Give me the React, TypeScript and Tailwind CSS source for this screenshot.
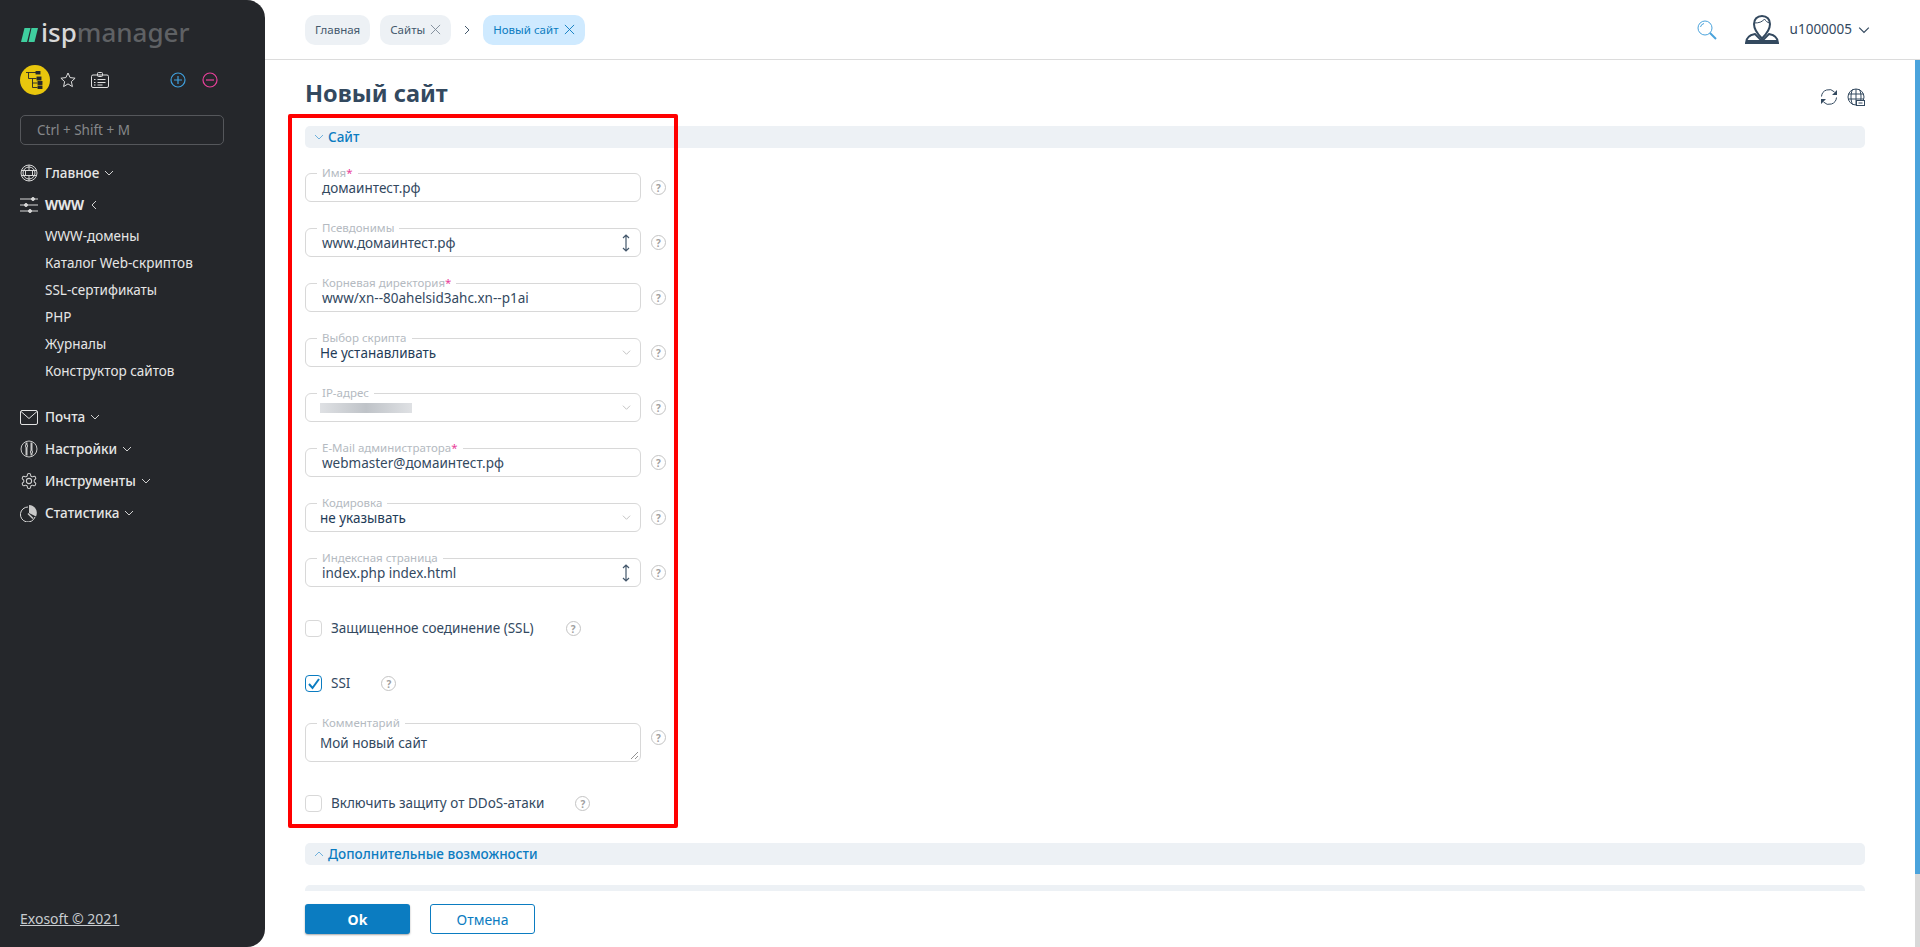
import { ReactNode } from "react";

const font = "font-['Noto_Sans','Open_Sans',sans-serif]";

const Chevron = ({ className = "", dir = "down" }: { className?: string; dir?: "down" | "up" | "left" | "right" }) => {
  const d = { down: "M1 3l4 4 4-4", up: "M1 7l4-4 4 4", left: "M7 1L3 5l4 4", right: "M3 1l4 4-4 4" }[dir];
  return (
    <svg viewBox="0 0 10 10" fill="none" stroke="currentColor" strokeWidth="1" className={className}>
      <path d={d} />
    </svg>
  );
};

const Cross = ({ className = "" }: { className?: string }) => (
  <svg viewBox="0 0 12 12" fill="none" stroke="currentColor" strokeWidth="1" className={className}>
    <path d="M1 1l10 10M11 1L1 11" />
  </svg>
);

const Help = ({ className = "" }: { className?: string }) => (
  <span className={`flex size-[15px] shrink-0 items-center justify-center rounded-full border border-[#c4c4c4] text-[10px] leading-none font-bold text-[#a0a0a0] ${className}`}>
    ?
  </span>
);

const Updown = () => (
  <svg viewBox="0 0 10 18" fill="none" stroke="#44586c" strokeWidth="1.2" className="h-[18px] w-[10px]">
    <path d="M5 1v16M2 4l3-3 3 3M2 14l3 3 3-3" />
  </svg>
);

const GlobeIcon = () => (
  <svg viewBox="0 0 18 18" fill="none" stroke="#d8d8d8" strokeWidth="1" className="size-[18px]">
    <circle cx="9" cy="9" r="8" />
    <circle cx="9" cy="9" r="6" />
    <rect x="5.5" y="6.5" width="7" height="5" />
    <path d="M9 1v5M9 12v5M1.5 6.5h4M12.5 6.5h4M1.5 11.5h4M12.5 11.5h4" />
  </svg>
);

const SlidersIcon = () => (
  <svg viewBox="0 0 18 16" fill="none" stroke="#d8d8d8" strokeWidth="1" className="h-[16px] w-[18px]">
    <path d="M0 2h18M0 8h18M0 14h18" />
    <circle cx="13" cy="2" r="1.5" fill="#d8d8d8" />
    <circle cx="6" cy="8" r="1.5" fill="#d8d8d8" />
    <circle cx="10" cy="14" r="1.5" fill="#d8d8d8" />
  </svg>
);

const MailIcon = () => (
  <svg viewBox="0 0 18 15" fill="none" stroke="#e2e2e2" strokeWidth="1" className="h-[15px] w-[18px]">
    <rect x="0.5" y="0.5" width="17" height="14" rx="1.5" />
    <path d="M1 1.5l8 7 8-7" />
  </svg>
);

const TuneIcon = () => (
  <svg viewBox="0 0 18 18" fill="none" stroke="#c8c8c8" strokeWidth="1" className="size-[18px]">
    <circle cx="9" cy="9" r="8" />
    <path d="M6.5 2.500v13M11.500 2.500v13" strokeWidth="2" />
    <circle cx="6.5" cy="6" r="1.2" fill="#25272b" />
    <circle cx="11.5" cy="12" r="1.2" fill="#25272b" />
  </svg>
);

const GearIcon = () => (
  <svg viewBox="0 0 24 24" fill="none" stroke="#d0d0d0" strokeWidth="1.4" className="size-[18px]">
    <circle cx="12" cy="12" r="3.5" />
    <path d="M12.22 2h-.44a2 2 0 0 0-2 2v.18a2 2 0 0 1-1 1.73l-.43.25a2 2 0 0 1-2 0l-.15-.08a2 2 0 0 0-2.73.73l-.22.38a2 2 0 0 0 .73 2.73l.15.1a2 2 0 0 1 1 1.72v.51a2 2 0 0 1-1 1.74l-.15.09a2 2 0 0 0-.73 2.73l.22.38a2 2 0 0 0 2.73.73l.15-.08a2 2 0 0 1 2 0l.43.25a2 2 0 0 1 1 1.73V20a2 2 0 0 0 2 2h.44a2 2 0 0 0 2-2v-.18a2 2 0 0 1 1-1.73l.43-.25a2 2 0 0 1 2 0l.15.08a2 2 0 0 0 2.73-.73l.22-.39a2 2 0 0 0-.73-2.73l-.15-.08a2 2 0 0 1-1-1.74v-.5a2 2 0 0 1 1-1.74l.15-.09a2 2 0 0 0 .73-2.73l-.22-.38a2 2 0 0 0-2.73-.73l-.15.08a2 2 0 0 1-2 0l-.43-.25a2 2 0 0 1-1-1.73V4a2 2 0 0 0-2-2z" />
  </svg>
);

const PieIcon = () => (
  <svg viewBox="0 0 18 18" className="size-[18px]">
    <path d="M8 3a7.5 7.5 0 1 0 7 10" fill="none" stroke="#d8d8d8" strokeWidth="1" />
    <path d="M9 1a8 8 0 0 1 7 11.5L9 9z" fill="#c8c8c8" />
    <path d="M8 9.5l5 5" stroke="#c8c8c8" strokeWidth="1.5" />
  </svg>
);

const NavHead = ({ icon, label, open, bold }: { icon: ReactNode; label: string; open?: boolean; bold?: boolean }) => (
  <div className="flex h-8 items-center">
    <span className="flex w-[25px] shrink-0 items-center">{icon}</span>
    <span className={`text-[13.5px] text-[#e6e6e6] ${bold ? "font-bold" : "font-medium"}`}>{label}</span>
    <Chevron dir={open ? "left" : "down"} className="ml-[5px] size-[10px] text-[#d0d0d0]" />
  </div>
);

const Sidebar = () => (
  <aside className="flex h-[947px] w-[265px] shrink-0 flex-col rounded-r-[18px] bg-[#25272b] pr-[41px] pb-[19px] pl-5">
    <div className="flex h-[48px] shrink-0 items-end">
      <svg viewBox="0 0 17 14" className="mb-[6px] ml-px h-[14px] w-[17px]">
        <path d="M3.500 0H9.500L6 14H0zM10.500 0H17l-3.500 14H7.500z" fill="#3fcf9f" />
      </svg>
      <span className="ml-[3px] text-[26px] leading-[32px] font-medium text-[#d8d8d8]">
        isp<span className="text-[#5f6164]">manager</span>
      </span>
    </div>
    <div className="mt-[17px] flex h-[30px] shrink-0 items-center">
      <span className="flex size-[30px] items-center justify-center rounded-full bg-[#e8c60d]">
        <svg viewBox="0 0 18 18" fill="none" stroke="#25272b" strokeWidth="0.9" className="size-[18px]">
          <path d="M0 1.500h10M2.500 1.500v6h8M6.500 7.500v9h5M6.500 12h5" />
          <rect x="10" y="0" width="4" height="3" fill="#25272b" />
          <rect x="11" y="6" width="4" height="3" fill="#25272b" />
          <rect x="12" y="10.500" width="4" height="3" fill="#25272b" />
          <rect x="12" y="15" width="4" height="3" fill="#25272b" />
        </svg>
      </span>
      <svg viewBox="0 0 16 16" fill="none" stroke="#e0e0e0" strokeWidth="1" className="ml-[10px] size-4">
        <path d="M8 1l2.100 4.600 5 .6-3.700 3.400 1 5L8 11.900l-4.400 2.700 1-5L.9 6.200l5-.6z" />
      </svg>
      <svg viewBox="0 0 18 16" fill="none" stroke="#e0e0e0" strokeWidth="1" className="ml-[15px] h-4 w-[18px]">
        <rect x="0.5" y="3" width="17" height="12.5" rx="1.5" />
        <rect x="6.5" y="0.5" width="5" height="4" rx="1" />
        <path d="M3 7.500h1.500M6.500 7.500h8M3 10.500h1.500M6.500 10.500h8M3 13h1.500M6.500 13h5" />
      </svg>
      <span className="ml-auto flex items-center gap-4">
        <svg viewBox="0 0 16 16" fill="none" stroke="#3f9fdc" strokeWidth="1.2" className="size-4">
          <circle cx="8" cy="8" r="7" />
          <path d="M4 8h8M8 4v8" />
        </svg>
        <svg viewBox="0 0 16 16" fill="none" stroke="#e8409a" strokeWidth="1.2" className="mr-[6px] size-4">
          <circle cx="8" cy="8" r="7" />
          <path d="M4 8h8" />
        </svg>
      </span>
    </div>
    <div className="mt-5 flex h-[30px] shrink-0 items-center rounded-[5px] border border-[#55575b] pl-4 text-[13.5px] text-[#85878a]">
      Ctrl + Shift + M
    </div>
    <nav className="mt-3 flex flex-1 flex-col">
      <NavHead icon={<GlobeIcon />} label="Главное" />
      <NavHead icon={<SlidersIcon />} label="WWW" open bold />
      <div className="flex flex-col pt-[2px] pb-4 pl-[25px] text-[13.5px] text-[#e6e6e6]">
        {["WWW-домены", "Каталог Web-скриптов", "SSL-сертификаты", "PHP", "Журналы", "Конструктор сайтов"].map((item) => (
          <span key={item} className="flex h-[27px] items-center">{item}</span>
        ))}
      </div>
      <NavHead icon={<MailIcon />} label="Почта" />
      <NavHead icon={<TuneIcon />} label="Настройки" />
      <NavHead icon={<GearIcon />} label="Инструменты" />
      <NavHead icon={<PieIcon />} label="Статистика" />
    </nav>
    <a className="self-start text-[14px] leading-[18px] text-[#c8ccd0] underline">Exosoft © 2021</a>
  </aside>
);

const Tab = ({ label, active, close }: { label: string; active?: boolean; close?: boolean }) => (
  <div className={`flex h-[30px] items-center gap-[5px] rounded-[10px] px-[10px] text-[11.5px] ${active ? "bg-[#cfeaff] text-[#0b7cc1]" : "bg-[#edf1f5] text-[#44586c]"}`}>
    {label}
    {close && <Cross className={`size-[11px] ${active ? "text-[#0b7cc1]" : "text-[#7d8a97]"}`} />}
  </div>
);

const Header = () => (
  <header className="flex h-[60px] shrink-0 items-center border-b border-[#dcdcdc] pr-[50px] pl-10">
    <Tab label="Главная" />
    <div className="ml-[10px]">
      <Tab label="Сайты" close />
    </div>
    <Chevron dir="right" className="mx-[11px] size-[10px] text-[#44586c]" />
    <Tab label="Новый сайт" active close />
    <svg viewBox="0 0 20 20" fill="none" stroke="#4aa3dc" strokeWidth="1" className="mr-[28px] ml-auto size-5">
      <circle cx="8" cy="8" r="7" />
      <path d="M3.500 7a4.500 4.500 0 0 1 3.500-3.500" />
      <path d="M13 13l6 6" strokeWidth="2" />
    </svg>
    <svg viewBox="0 0 34 30" className="h-[30px] w-[34px]" fill="none" stroke="#33495f" strokeWidth="2">
      <path d="M17 1c5 0 8 3.500 8 8 0 5-4.500 11-8 14.500C13.500 20 9 14 9 9c0-4.500 3-8 8-8z" />
      <path d="M9.500 8c4 0 8-1 10-4 1 2 3 3.500 5 4" strokeWidth="1" />
      <path d="M10 19c-5 1-9 3-9 9h32c0-6-4-8-9-9l-7 7z" strokeWidth="2" />
      <path d="M2 26.500h30" strokeWidth="3" />
    </svg>
    <span className="ml-[11px] text-[13.5px] text-[#33495f]">u1000005</span>
    <Chevron className="ml-[6px] size-3 text-[#33495f]" />
  </header>
);

const SectionBar = ({ title, open }: { title: string; open?: boolean }) => (
  <div className="flex h-[22px] shrink-0 items-center rounded-[5px] bg-[#edf1f5] pl-[9px]">
    <Chevron dir={open ? "down" : "up"} className="size-[10px] text-[#6fb1dc]" />
    <span className="ml-[4px] text-[13.5px] font-medium text-[#0b7cc1]">{title}</span>
  </div>
);

const Field = ({ label, value, required, kind, tall, disabled }: {
  label: string;
  value?: string;
  required?: boolean;
  kind?: "select" | "multi" | "text";
  tall?: boolean;
  disabled?: boolean;
}) => (
  <div className="flex items-center">
    <div className={`relative flex w-[336px] shrink-0 rounded-[6px] border border-[#d8d8d8] pr-[9px] ${tall ? "h-[39px] pt-[10px]" : "h-[29px] items-center"} ${kind === "select" || tall ? "pl-[14px]" : "pl-4"}`}>
      <span className="absolute -top-[8px] left-[11px] bg-white px-[5px] text-[11.5px] leading-[14px] text-[#b4bac1]">
        {label}
        {required && <span className="text-[#e8409a]">*</span>}
      </span>
      {disabled ? (
        <span className="h-[10px] w-[92px] bg-gradient-to-r from-[#dfe1e4] via-[#bfc3c8] to-[#dfe1e4]" />
      ) : (
        <span className={`text-[13.5px] leading-[18px] ${kind === "select" ? "text-[#1f3c58]" : "text-[#33495f]"}`}>{value}</span>
      )}
      {kind === "select" && <Chevron className="ml-auto size-[9px] self-center text-[#bdbdbd]" />}
      {kind === "multi" && (
        <span className="ml-auto self-center">
          <Updown />
        </span>
      )}
      {tall && (
        <svg viewBox="0 0 9 9" stroke="#777" strokeWidth="0.8" className="absolute right-[1px] bottom-[1px] size-[9px]">
          <path d="M1 8l7-7M5 8l3-3" />
        </svg>
      )}
    </div>
    <Help className={`ml-[10px] ${tall ? "-mt-[10px]" : ""}`} />
  </div>
);

const Check = ({ label, checked, helpGap }: { label: string; checked?: boolean; helpGap: string }) => (
  <div className="flex h-[17px] items-center">
    {checked ? (
      <span className="flex size-[17px] items-center justify-center rounded-[4px] border border-[#0b7cc1]">
        <svg viewBox="0 0 14 14" fill="none" stroke="#0b7cc1" strokeWidth="2" className="size-[14px]">
          <path d="M2 7l3.500 4L12 2" />
        </svg>
      </span>
    ) : (
      <span className="size-[17px] rounded-[4px] border border-[#d8d8d8]" />
    )}
    <span className="ml-[9px] text-[13.5px] text-[#33495f]">{label}</span>
    <Help className={helpGap} />
  </div>
);

const App = () => (
  <div className={`flex h-[947px] w-[1920px] overflow-hidden bg-white ${font}`}>
    <Sidebar />
    <main className="relative flex min-w-0 flex-1 flex-col">
      <Header />
      <div className="relative flex min-h-0 flex-1 flex-col overflow-hidden pr-[55px] pl-10">
        <div className="mt-[18px] flex h-[30px] shrink-0 items-center justify-between">
          <h1 className="text-[23.5px] leading-[30px] font-bold text-[#33495f]">Новый сайт</h1>
          <div className="mt-[8px] flex items-center gap-[9px]">
            <svg viewBox="0 0 18 18" fill="none" stroke="#33495f" strokeWidth="1" className="size-[18px]">
              <path d="M1.500 8.500a7.500 7.500 0 0 1 13-4.500M16.500 9.500a7.500 7.500 0 0 1-13 4.500" />
              <path d="M17 2v5h-5zM1 16v-5h5z" fill="#33495f" stroke="none" />
            </svg>
            <svg viewBox="0 0 18 18" fill="none" stroke="#33495f" strokeWidth="1" className="size-[18px]">
              <circle cx="9" cy="9" r="8" />
              <path d="M9 1v16M1.500 6h15M1.500 11h15M5.500 1.500c-2 4-2 11 0 15M12.500 1.500c2 4 2 11 0 15" />
              <rect x="9.500" y="12.500" width="8" height="5" fill="white" />
              <path d="M11.500 15h4" />
            </svg>
          </div>
        </div>
        <div className="mt-[18px]">
          <SectionBar title="Сайт" open />
        </div>
        <div className="mt-[25px] flex flex-col gap-[26px]">
          <Field label="Имя" required value="домаинтест.рф" kind="text" />
          <Field label="Псевдонимы" value="www.домаинтест.рф" kind="multi" />
          <Field label="Корневая директория" required value="www/xn--80ahelsid3ahc.xn--p1ai" kind="text" />
          <Field label="Выбор скрипта" value="Не устанавливать" kind="select" />
          <Field label="IP-адрес" kind="select" disabled />
          <Field label="E-Mail администратора" required value="webmaster@домаинтест.рф" kind="text" />
          <Field label="Кодировка" value="не указывать" kind="select" />
          <Field label="Индексная страница" value="index.php index.html" kind="multi" />
        </div>
        <div className="mt-[33px]">
          <Check label="Защищенное соединение (SSL)" helpGap="ml-[32px]" />
        </div>
        <div className="mt-[38px]">
          <Check label="SSI" checked helpGap="ml-[31px]" />
        </div>
        <div className="mt-[31px]">
          <Field label="Комментарий" value="Мой новый сайт" kind="text" tall />
        </div>
        <div className="mt-[33px]">
          <Check label="Включить защиту от DDoS-атаки" helpGap="ml-[31px]" />
        </div>
        <div className="mt-[31px]">
          <SectionBar title="Дополнительные возможности" />
        </div>
        <div className="mt-5 h-[22px] shrink-0 rounded-[5px] bg-[#edf1f5]" />
        <div className="absolute top-[54px] left-[23px] h-[714px] w-[390px] rounded-[2px] border-4 border-[#ff0000]" />
      </div>
      <div className="flex h-[56px] shrink-0 items-start gap-5 pt-[13px] pl-10">
        <button className="h-[30px] w-[105px] rounded-[3px] bg-[#0b7cc1] text-[14px] font-bold text-white shadow-[0_1px_2px_rgba(0,0,0,0.35)]">Ok</button>
        <button className="h-[30px] w-[105px] rounded-[3px] border border-[#0b7cc1] text-[14px] text-[#0b7cc1]">Отмена</button>
      </div>
      <div className="absolute top-[60px] right-0 flex h-[887px] w-[5px] flex-col bg-[#d9d9d9]">
        <div className="h-[814px] bg-[#4aa3dc]" />
      </div>
    </main>
  </div>
);

export default App;
